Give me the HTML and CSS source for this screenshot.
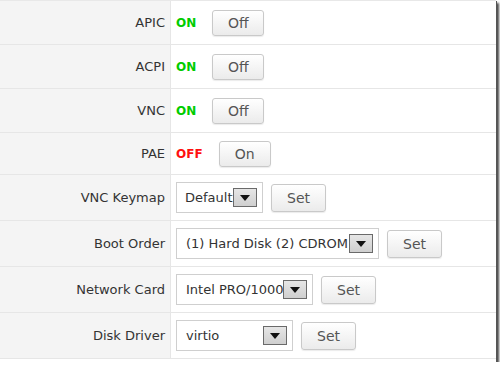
FILE: index.html
```html
<!DOCTYPE html>
<html>
    <head>
        <meta http-equiv="Content-Type" content="text/html; charset=utf-8"/>
        <link rel="stylesheet" href="styles.css">
    </head>
    <body>
        <div class="frame">
            <div class="settings">
                <div class="row">
                    <div class="label">APIC</div>
                    <div class="value"><span class="state on">ON</span><button class="btn toggle">Off</button></div>
                </div>
                <div class="row">
                    <div class="label">ACPI</div>
                    <div class="value"><span class="state on">ON</span><button class="btn toggle">Off</button></div>
                </div>
                <div class="row">
                    <div class="label">VNC</div>
                    <div class="value"><span class="state on">ON</span><button class="btn toggle">Off</button></div>
                </div>
                <div class="row short">
                    <div class="label">PAE</div>
                    <div class="value"><span class="state off">OFF</span><button class="btn toggle">On</button></div>
                </div>
                <div class="row tall">
                    <div class="label">VNC Keymap</div>
                    <div class="value">
                        <div class="select keymap"><span class="sel_text">Default</span><span class="arrow"></span></div>
                        <button class="btn set">Set</button>
                    </div>
                </div>
                <div class="row tall">
                    <div class="label">Boot Order</div>
                    <div class="value">
                        <div class="select boot"><span class="sel_text">(1) Hard Disk (2) CDROM</span><span class="arrow"></span></div>
                        <button class="btn set">Set</button>
                    </div>
                </div>
                <div class="row tall">
                    <div class="label">Network Card</div>
                    <div class="value">
                        <div class="select netcard"><span class="sel_text">Intel PRO/1000</span><span class="arrow"></span></div>
                        <button class="btn set">Set</button>
                    </div>
                </div>
                <div class="row tall">
                    <div class="label">Disk Driver</div>
                    <div class="value">
                        <div class="select disk"><span class="sel_text">virtio</span><span class="arrow"></span></div>
                        <button class="btn set">Set</button>
                    </div>
                </div>
            </div>
        </div>
    </body>
</html>
```

FILE: styles.css
```css
body {
    margin: 0;
    background: #fff;
    font-family: "DejaVu Sans", Verdana, sans-serif;
    font-size: 13px;
    color: #333;
}

/* screenshot frame with the drop shadow */
.frame {
    width: 496px;
    height: 362px;
    background: #fff;
    box-shadow: 1px 1px 0 #555, 3px 3px 2px rgba(0, 0, 0, 0.7);
}

.settings {
    border-top: 1px solid #e8e8e8;
}

.row {
    display: flex;
    height: 44px;
    box-sizing: border-box;
    border-bottom: 1px solid #e6e6e6;
}

.row.short {
    height: 42px;
}

.row.tall {
    height: 46px;
}

.label {
    width: 171px;
    flex: none;
    box-sizing: border-box;
    padding-right: 5px;
    background: #f4f4f4;
    border-right: 1px solid #e6e6e6;
    display: flex;
    align-items: center;
    justify-content: flex-end;
}

.value {
    flex: 1;
    display: flex;
    align-items: center;
    padding-left: 5px;
}

.state {
    font-weight: bold;
    font-size: 12px;
}

.on {
    color: #00cc00;
}

.off {
    color: #ff1010;
}

.btn {
    font-family: "DejaVu Sans", Verdana, sans-serif;
    font-size: 14px;
    color: #555;
    background: linear-gradient(#ffffff, #ebebeb);
    border: 1px solid #c9c9c9;
    border-radius: 3px;
    padding: 0;
    box-shadow: 0 1px 1px rgba(0, 0, 0, 0.08);
}

.toggle {
    width: 52px;
    height: 26px;
    margin-left: 16px;
}

.set {
    width: 55px;
    height: 28px;
    margin-left: 8px;
}

.select {
    display: flex;
    align-items: center;
    height: 31px;
    box-sizing: border-box;
    border: 1px solid #cfcfcf;
    background: #fff;
    padding: 0 5px 0 9px;
}

.sel_text {
    flex: 1;
    overflow: hidden;
    white-space: nowrap;
    color: #333;
}

.keymap { width: 87px; padding-left: 8px; }
.boot { width: 203px; }
.netcard { width: 137px; }
.disk { width: 117px; }

.arrow {
    flex: none;
    width: 24px;
    height: 19px;
    box-sizing: border-box;
    border: 1px solid #6a6a6a;
    background: linear-gradient(#e6e6e6, #cfcfcf);
    display: flex;
    align-items: center;
    justify-content: center;
}

.arrow::after {
    content: "";
    border-left: 5px solid transparent;
    border-right: 5px solid transparent;
    border-top: 6px solid #111;
}
```
